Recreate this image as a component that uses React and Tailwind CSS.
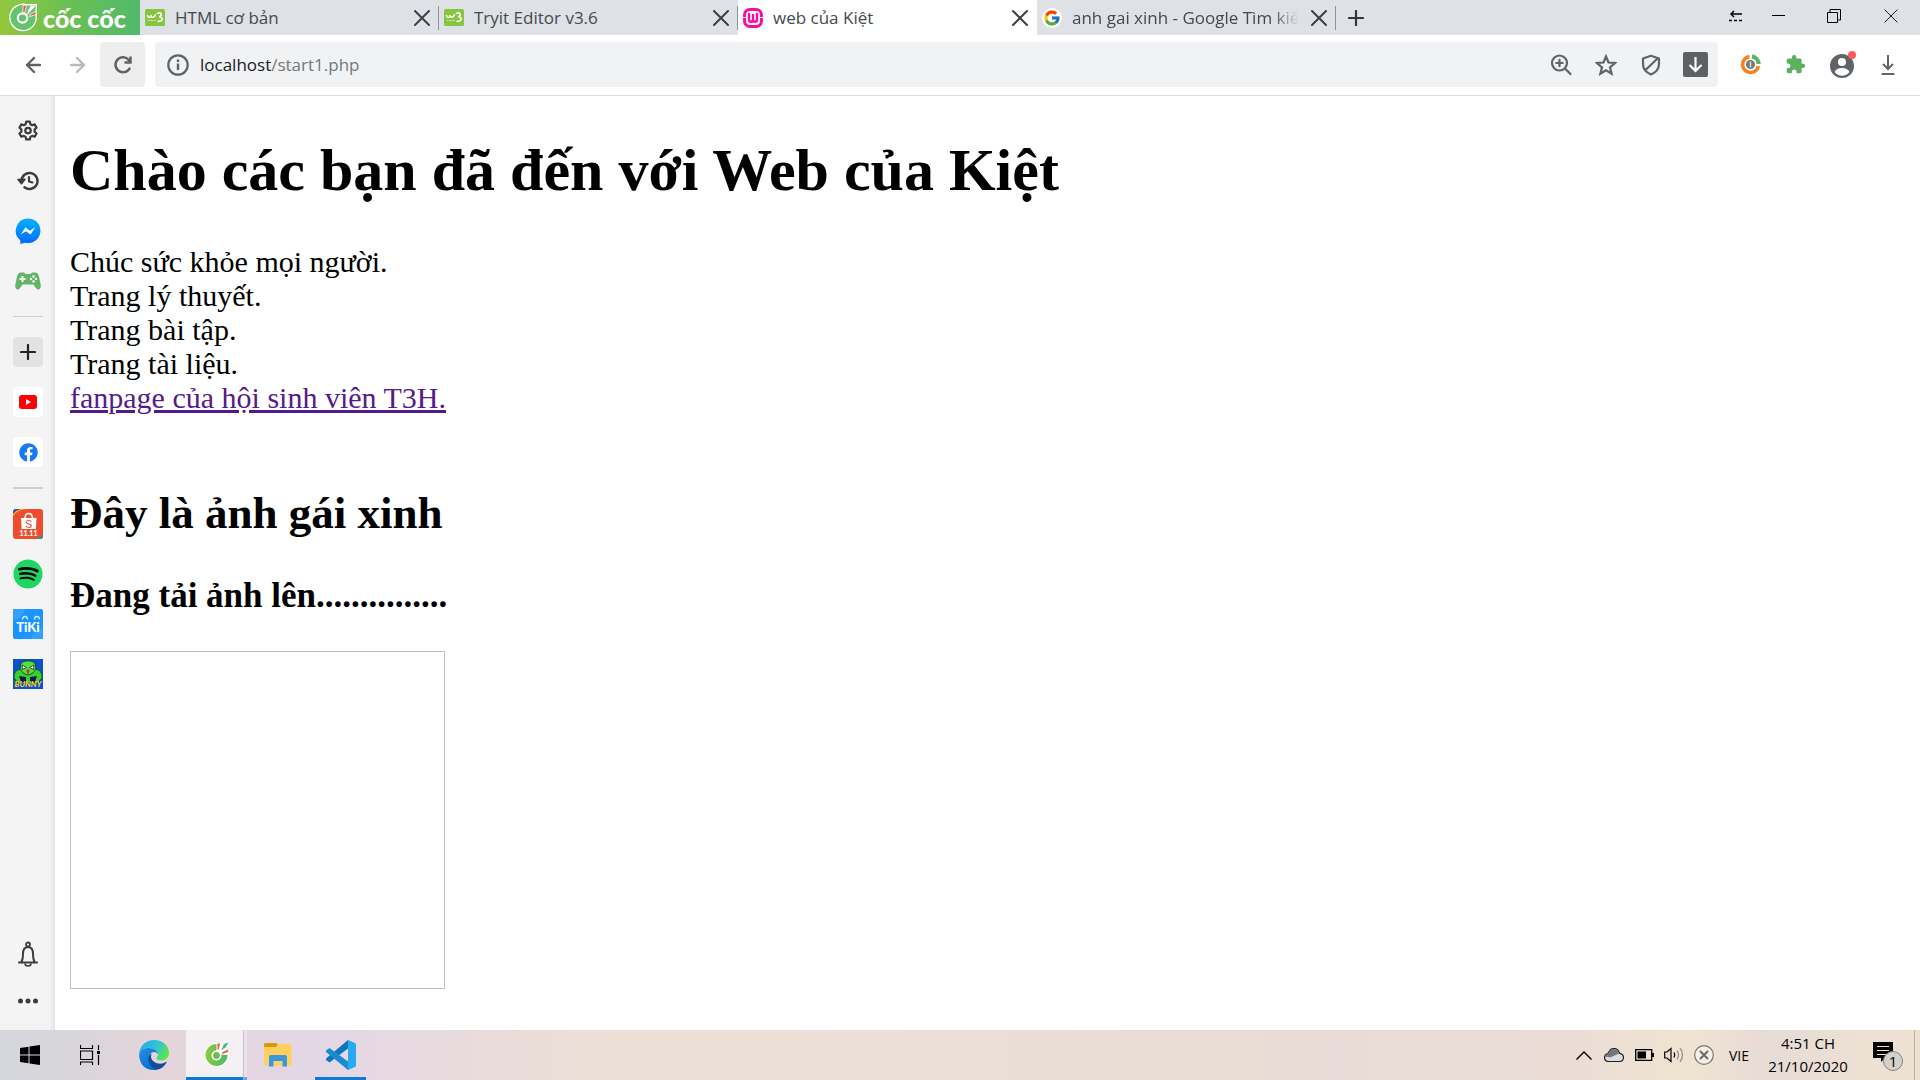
import React from "react";
import { FcGoogle } from "react-icons/fc";
import { FaSpotify, FaFacebook } from "react-icons/fa";
import { MdExtension } from "react-icons/md";

const line = { fill: "none", stroke: "currentColor", strokeLinecap: "round", strokeLinejoin: "round" };

function CocCocMark() {
  return (
    <svg width="30" height="30" viewBox="0 0 30 30" aria-hidden="true">
      <path d="M18 2.500A13 13 0 1 0 26.500 11L27.500 2z" fill="#62c56d" />
      <path d="M19 2.200A13.200 13.200 0 1 0 27 12L27.200 1.800H19" fill="none" stroke="#fff" strokeWidth="1.400" />
      <circle cx="13.500" cy="15" r="4.700" fill="none" stroke="#fff" strokeWidth="2.200" />
      <path d="M14 2.500l3-.3.300 1.500-1.500 6-2-.5z M26.500 8.500l.8 3-7 2.200.6-2z" fill="#f2563c" stroke="#fff" strokeWidth=".8" />
      <path d="M18.500 8.500L22 2.500l4.500.5-6.500 7z" fill="#fff" />
      <path d="M17 11.500l3-2" stroke="#fff" strokeWidth="1.500" />
    </svg>
  );
}

function W3Favicon() {
  return (
    <svg width="20" height="17" viewBox="0 0 20 17" aria-hidden="true">
      <rect width="20" height="17" rx="1.500" fill="#87c540" />
      <path d="M2.500 6.500c.3 2.600 3.300 2.600 3.500 0 .2 2.600 3.600 2.600 4.200-.7" {...line} stroke="#fff" strokeWidth="1.500" />
      <path d="M12.400 4.400c3.400-1.700 5.400 1.400 2.300 3.300 4.100.9 2.800 5.300-1.700 4.600" {...line} stroke="#fff" strokeWidth="1.600" />
      <path d="M3 11.500h8" stroke="#d9efc1" strokeWidth="1" strokeDasharray="1 .5" />
    </svg>
  );
}

function WampFavicon() {
  return (
    <svg width="20" height="20" viewBox="0 0 20 20" aria-hidden="true">
      <rect x="1.500" y="1.500" width="17" height="17" rx="5.500" fill="#fff" stroke="#f90aa0" strokeWidth="3" />
      <path d="M6 6v5.500q0 2.300 2 2.300t2-2.300V7v4.500q0 2.300 2 2.300t2-2.300V6" {...line} stroke="#f90aa0" strokeWidth="2.400" />
      <path d="M0 9.500h3.200M16.800 9.500H20" stroke="#fff" strokeWidth="1" />
    </svg>
  );
}

function GoogleFavicon() {
  return (
    <span className="flex size-5 items-center justify-center rounded-full bg-white">
      <FcGoogle size={18} />
    </span>
  );
}

function Cross({ size = 16, width = 2 }) {
  return (
    <svg width={size} height={size} viewBox="0 0 16 16" aria-hidden="true">
      <path d="M1 1l14 14M15 1L1 15" fill="none" stroke="currentColor" strokeWidth={width} strokeLinecap="round" />
    </svg>
  );
}

const tabs = [
  { title: "HTML cơ bản", icon: <W3Favicon /> },
  { title: "Tryit Editor v3.6", icon: <W3Favicon /> },
  { title: "web của Kiệt", icon: <WampFavicon />, active: true },
  { title: "anh gai xinh - Google Tìm kiếm", icon: <GoogleFavicon />, clipped: true },
];

function Tab({ title, icon, active, clipped }) {
  return (
    <div className={`flex h-full w-[299px] min-w-0 items-center pl-[5px] ${active ? "bg-white" : "bg-[#dee1e6]"}`}>
      <span className="flex w-6 shrink-0 items-center">{icon}</span>
      <button
        type="button"
        className={`ml-1.5 min-w-0 flex-1 overflow-hidden text-left whitespace-nowrap ${
          clipped ? "[mask-image:linear-gradient(to_right,#000_88%,transparent)]" : ""
        }`}
      >
        {title}
      </button>
      <button type="button" aria-label={`Đóng ${title}`} className="ml-2 flex size-6 shrink-0 items-center justify-center text-[#3c4043]">
        <Cross />
      </button>
      <span className={`ml-1 h-6 w-px shrink-0 ${active ? "bg-transparent" : "bg-[#8e9196]"}`} />
    </div>
  );
}

function TabStrip() {
  return (
    <header className="flex h-[35px] shrink-0 items-center bg-[#dee1e6] text-[17px] text-[#45494d]">
      <button
        type="button"
        className="flex h-full w-[140px] shrink-0 items-center gap-1 bg-linear-to-r from-[#93c83d] via-[#69bf53] to-[#50ba6a] pl-[9px] text-white"
      >
        <CocCocMark />
        <span className="font-['Lato'] text-[25px] leading-8 font-black whitespace-nowrap">cốc cốc</span>
      </button>
      {tabs.map((tab) => (
        <Tab key={tab.title} {...tab} />
      ))}
      <button type="button" aria-label="Thẻ mới" className="flex size-10 items-center justify-center text-[#33373a]">
        <svg width="16" height="16" viewBox="0 0 16 16" aria-hidden="true">
          <path d="M8 1v14M1 8h14" {...line} strokeWidth="2.200" />
        </svg>
      </button>
      <div className="ml-auto flex h-full shrink-0 items-center pb-1 text-black">
        <button type="button" aria-label="Cuộn thẻ" className="flex w-7 justify-center">
          <svg width="14" height="12" viewBox="0 0 14 12" aria-hidden="true">
            <path d="M13 4H2M5 1L2 4l3 3" fill="none" stroke="currentColor" strokeWidth="1.500" />
            <path d="M0 10.500h14" stroke="currentColor" strokeWidth="1.500" strokeDasharray="3 2" />
          </svg>
        </button>
        <button type="button" aria-label="Thu nhỏ" className="flex w-14 justify-center">
          <svg width="13" height="13" viewBox="0 0 13 13" aria-hidden="true">
            <path d="M0 6.500h13" stroke="currentColor" />
          </svg>
        </button>
        <button type="button" aria-label="Khôi phục" className="flex w-14 justify-center">
          <svg width="14" height="14" viewBox="0 0 14 14" aria-hidden="true">
            <path d="M.5 3.500h10v10H.5zM3 3V.5h10.500v10.500H11" fill="none" stroke="currentColor" />
          </svg>
        </button>
        <button type="button" aria-label="Đóng" className="flex w-[58px] justify-center">
          <Cross size={14} width={1} />
        </button>
      </div>
    </header>
  );
}

function ToolButton({ label, children, className = "" }) {
  return (
    <button type="button" aria-label={label} className={`flex size-[45px] shrink-0 items-center justify-center ${className}`}>
      {children}
    </button>
  );
}

function Toolbar() {
  return (
    <nav className="flex shrink-0 items-center border-b border-[#dadce0] bg-white px-[10px] pt-[7px] pb-2 text-[#5f6368]">
      <ToolButton label="Quay lại">
        <svg width="16" height="18" viewBox="0 0 16 18" aria-hidden="true">
          <path d="M15 9H2M9 2L2 9l7 7" {...line} strokeWidth="2.400" />
        </svg>
      </ToolButton>
      <ToolButton label="Tiến" className="text-[#bababc]">
        <svg width="16" height="18" viewBox="0 0 16 18" aria-hidden="true">
          <path d="M1 9h13M7 2l7 7-7 7" {...line} strokeWidth="2.400" />
        </svg>
      </ToolButton>
      <ToolButton label="Tải lại" className="rounded bg-[#eeeeee]">
        <svg width="18" height="20" viewBox="0 0 18 20" aria-hidden="true">
          <path d="M15.500 13.500A7.500 7.500 0 1 1 15.500 6" {...line} strokeWidth="2.500" />
          <path d="M16.500 1.500V7.500h-6" fill="none" stroke="currentColor" strokeWidth="2.500" />
        </svg>
      </ToolButton>
      <div className="ml-[10px] flex h-[45px] min-w-0 flex-1 items-center rounded bg-[#f1f2f4] pl-3">
        <svg width="22" height="22" viewBox="0 0 22 22" aria-hidden="true">
          <circle cx="11" cy="11" r="9.700" fill="none" stroke="currentColor" strokeWidth="2.200" />
          <path d="M11 9.500V16M11 5.500V8" stroke="currentColor" strokeWidth="2.400" />
        </svg>
        <button type="button" className="ml-[11px] flex-1 truncate text-left text-[17px] text-[#74777b]">
          <span className="text-[#202124]">localhost</span>/start1.php
        </button>
        <ToolButton label="Thu phóng">
          <svg width="22" height="22" viewBox="0 0 22 22" aria-hidden="true">
            <circle cx="9.500" cy="9" r="7.500" {...line} strokeWidth="2.200" />
            <path d="M15 14.500l5.500 5.500M9.500 5.800v6.400M6.300 9h6.400" {...line} strokeWidth="2.200" />
          </svg>
        </ToolButton>
        <ToolButton label="Đánh dấu trang">
          <svg width="22" height="22" viewBox="0 0 22 22" aria-hidden="true">
            <path d="M11 2.500l2.500 6 6.500.5-5 4.300 1.600 6.400L11 16.300l-5.600 3.400L7 13.300 2 9l6.500-.5z" fill="none" stroke="currentColor" strokeWidth="2.200" />
          </svg>
        </ToolButton>
        <ToolButton label="Chặn quảng cáo">
          <svg width="20" height="22" viewBox="0 0 20 22" aria-hidden="true">
            <path d="M10 1.800l8 2.700v5.500c0 4.800-3 8.300-8 10.500-5-2.200-8-5.700-8-10.500V4.500zM4.500 16L16.500 4.500" {...line} strokeWidth="2.200" />
          </svg>
        </ToolButton>
        <ToolButton label="Tải video">
          <svg width="25" height="25" viewBox="0 0 25 25" aria-hidden="true">
            <rect width="25" height="25" rx="2" fill="#5f6063" />
            <path d="M12.500 5v14M6.500 13l6 6 6-6" fill="none" stroke="#fff" strokeWidth="2.200" />
          </svg>
        </ToolButton>
      </div>
      <ToolButton label="Tiết kiệm" className="ml-[10px]">
        <svg width="21" height="21" viewBox="0 0 21 21" aria-hidden="true">
          <path d="M9.500 2.600A8 8 0 1 0 18.400 12" fill="none" stroke="#f58220" strokeWidth="3.600" />
          <path d="M12 2.400A8 8 0 0 1 18.600 10" fill="none" stroke="#5cb260" strokeWidth="4.200" />
          <circle cx="10.500" cy="10.500" r="4.500" fill="#77787b" />
          <path d="M10.500 7.500v6" stroke="#d7d8da" strokeWidth="1.500" />
        </svg>
      </ToolButton>
      <ToolButton label="Tiện ích">
        <MdExtension size={21} color="#5cb05f" />
      </ToolButton>
      <ToolButton label="Hồ sơ" className="ml-0.5">
        <svg width="26" height="27" viewBox="0 0 26 27" aria-hidden="true">
          <circle cx="12" cy="15" r="12" fill="#5f6368" />
          <circle cx="12" cy="11" r="4" fill="#fff" />
          <path d="M4.500 21q2-4 7.500-4t7.500 4a9.500 9.500 0 0 1-15 0z" fill="#fff" />
          <circle cx="22" cy="4" r="4" fill="#ff5a5f" />
        </svg>
      </ToolButton>
      <ToolButton label="Tải xuống">
        <svg width="16" height="20" viewBox="0 0 16 20" aria-hidden="true">
          <path d="M8 0v14M3 9l5 5 5-5" fill="none" stroke="currentColor" strokeWidth="2" />
          <path d="M2.500 19h11" {...line} strokeWidth="2.200" />
        </svg>
      </ToolButton>
    </nav>
  );
}

function Gear() {
  return (
    <svg width="22" height="22" viewBox="0 0 24 24" aria-hidden="true">
      <path
        d="M10 1.800h4l.6 2.800 1.900 1.100 2.800-.9 2 3.500-2.100 2v2.400l2.100 2-2 3.500-2.800-.9-1.900 1.100-.6 2.800h-4l-.6-2.800-1.900-1.100-2.800.9-2-3.500 2.100-2v-2.400l-2.100-2 2-3.500 2.800.9 1.900-1.100z"
        {...line}
        strokeWidth="2.400"
      />
      <circle cx="12" cy="11.500" r="3" fill="none" stroke="currentColor" strokeWidth="2.400" />
    </svg>
  );
}

function History() {
  return (
    <svg width="22" height="20" viewBox="0 0 22 20" aria-hidden="true">
      <path d="M4.500 10a8 8 0 1 1 3 6.200" {...line} strokeWidth="2.500" />
      <path d="M1 8.500l7-.3-3.500 4.600z" fill="currentColor" stroke="currentColor" strokeWidth="1.500" strokeLinejoin="round" />
      <path d="M12 6v4.500l3.500 1" {...line} strokeWidth="2.200" />
    </svg>
  );
}

function Messenger() {
  return (
    <svg width="26" height="26" viewBox="0 0 26 26" aria-hidden="true">
      <defs>
        <linearGradient id="messenger" x1="0" y1="0" x2="0" y2="1">
          <stop offset="0" stopColor="#00b2ff" />
          <stop offset="1" stopColor="#006aff" />
        </linearGradient>
      </defs>
      <path d="M13 .5a12.300 12.300 0 1 1-3 24.200L5.500 26l-.3-3.800A12.300 12.300 0 0 1 13 .5z" fill="url(#messenger)" />
      <path d="M5.500 16.500l5-7.200 4.300 3.400L20.500 9l-5 7.500-4.500-3.300z" fill="#fff" />
    </svg>
  );
}

function Gamepad() {
  return (
    <svg width="26" height="18" viewBox="0 0 26 18" aria-hidden="true">
      <path d="M5 .5h4l1.500 1.500h5L17 .5h4q2 .5 3 4l1.800 9q.2 3.500-2.300 4-1.800.2-3-2l-2-3h-11l-2 3q-1.200 2.200-3 2Q0 17 .2 13.500L2 4.500Q3 1 5 .5z" fill="#63b565" />
      <path d="M7.500 4v6M4.500 7h6" stroke="#fff" strokeWidth="2" />
      <g fill="#fff">
        <circle cx="18.500" cy="4.500" r="1.200" />
        <circle cx="18.500" cy="9.500" r="1.200" />
        <circle cx="16" cy="7" r="1.200" />
        <circle cx="21" cy="7" r="1.200" />
      </g>
    </svg>
  );
}

function YouTube() {
  return (
    <svg width="18" height="14" viewBox="0 0 18 14" aria-hidden="true">
      <rect width="18" height="14" rx="3" fill="#f00" />
      <path d="M7 4l5 3-5 3z" fill="#fff" />
    </svg>
  );
}

function Shopee() {
  return (
    <svg width="30" height="30" viewBox="0 0 30 30" aria-hidden="true">
      <rect width="30" height="30" rx="3" fill="#ee4d2d" />
      <path d="M0 6V3q0-3 3-3h5Q3 1 0 6z" fill="#1c62ad" />
      <path d="M0 7Q5 0 15 0H9Q3 1 0 5z" fill="#f6b51e" />
      <path d="M23 30q5-1 7-5v2q0 3-3 3z" fill="#2389c9" />
      <path d="M12 9q.3-4.500 3.700-4.500T19.500 9" fill="none" stroke="#fff" strokeWidth="1.500" />
      <path d="M8 9h15.500l-.6 11H8.600z" fill="#fff" />
      <text x="15.700" y="18.500" textAnchor="middle" fontSize="11" fill="#ee4d2d" fontFamily="Liberation Sans">S</text>
      <text x="15.500" y="27" textAnchor="middle" fontSize="7" fontWeight="900" fill="#fff" fontFamily="Lato">11.11</text>
    </svg>
  );
}

function Tiki() {
  return (
    <svg width="30" height="30" viewBox="0 0 30 30" aria-hidden="true">
      <rect width="30" height="30" rx="2" fill="#1a94ff" />
      <path d="M0 0h12q-2 9-12 12zM18 30q2-9 12-11v11z" fill="#34a1ff" />
      <text x="15" y="22.500" textAnchor="middle" fontSize="13" fontWeight="900" fill="#fff" fontFamily="Lato">TiKi</text>
      <path d="M9.500 10.500q0-3 2.500-3t2.500 3M21.500 10.500q0-3 2.500-3t2.500 3" fill="none" stroke="#d6edff" strokeWidth="1.400" />
    </svg>
  );
}

function Bunny() {
  return (
    <svg width="30" height="30" viewBox="0 0 30 30" aria-hidden="true">
      <rect width="30" height="30" fill="#0b52d0" />
      <path d="M1 19q-1-7 6-9h16q7 2 6 9l-4 5H5z" fill="#39cf35" stroke="#0a3410" strokeWidth=".8" />
      <path d="M6 17l7 1v5H8zM24 17l-7 1v5h5z" fill="#0c1c4a" />
      <path d="M8 4q7-4.500 14 0l1 5q-2 6-8 7-6-1-8-7z" fill="#4ee146" stroke="#0a3410" strokeWidth=".8" />
      <path d="M9 6l4.500 2.500L9.500 10.500zM21 6l-4.500 2.500 4 2z" fill="#fff" stroke="#10350f" strokeWidth=".8" />
      <path d="M13.500 10.500h3l-.5 4h-2z" fill="#d8262a" />
      <text x="15" y="28" textAnchor="middle" fontSize="8" fontWeight="900" fill="#ffc928" fontFamily="Lato" fontStyle="italic">BUNNY</text>
    </svg>
  );
}

function SideButton({ label, children, className = "" }) {
  return (
    <button type="button" aria-label={label} className={`flex size-[30px] shrink-0 items-center justify-center ${className}`}>
      {children}
    </button>
  );
}

function Sidebar() {
  return (
    <aside className="flex w-[55px] shrink-0 flex-col items-center gap-5 border-r border-[#e4e4e4] bg-[#f4f4f4] pt-5 pl-0.5 text-[#3c3c3c] shadow-[inset_-5px_0_4px_-3px_#e6e6e6]">
      <SideButton label="Cài đặt"><Gear /></SideButton>
      <SideButton label="Lịch sử"><History /></SideButton>
      <SideButton label="Messenger"><Messenger /></SideButton>
      <SideButton label="Trò chơi"><Gamepad /></SideButton>
      <hr className="w-[30px] border-t border-[#cfcfcf]" />
      <SideButton label="Thêm" className="rounded bg-[#e3e3e3] text-[#222]">
        <svg width="16" height="16" viewBox="0 0 16 16" aria-hidden="true">
          <path d="M8 1v14M1 8h14" {...line} strokeWidth="2.200" />
        </svg>
      </SideButton>
      <SideButton label="YouTube" className="rounded bg-white"><YouTube /></SideButton>
      <SideButton label="Facebook" className="rounded bg-white"><FaFacebook size={19} color="#1877f2" /></SideButton>
      <hr className="w-[30px] border-t-2 border-[#cfcfcf]" />
      <SideButton label="Shopee"><Shopee /></SideButton>
      <SideButton label="Spotify" className="rounded-full bg-[radial-gradient(circle,#000_12px,transparent_13px)]">
        <FaSpotify size={30} color="#1ed760" />
      </SideButton>
      <SideButton label="Tiki"><Tiki /></SideButton>
      <SideButton label="Bunny"><Bunny /></SideButton>
      <div className="mt-auto flex flex-col gap-[17px] pb-[14px]">
        <SideButton label="Thông báo">
          <svg width="20" height="26" viewBox="0 0 20 26" aria-hidden="true">
            <path d="M1 21.500h18M3.500 21q1.500-3 1.500-8c0-4.500 2-7 5-7s5 2.500 5 7q0 5 1.500 8" {...line} strokeWidth="2" />
            <circle cx="10" cy="3.500" r="2" {...line} strokeWidth="1.800" />
            <path d="M7 22.500q0 2.500 3 2.500t3-2.500" fill="none" stroke="currentColor" strokeWidth="1.600" />
          </svg>
        </SideButton>
        <SideButton label="Khác">
          <svg width="20" height="6" viewBox="0 0 20 6" fill="currentColor" aria-hidden="true">
            <circle cx="2.500" cy="3" r="2.500" />
            <circle cx="10" cy="3" r="2.500" />
            <circle cx="17.500" cy="3" r="2.500" />
          </svg>
        </SideButton>
      </div>
    </aside>
  );
}

function Page() {
  return (
    <main className="min-w-0 flex-1 overflow-hidden bg-white px-[15px] font-['Liberation_Serif',serif] text-[30px] leading-[34px] text-black">
      <h1 className="mt-10 text-[60px] leading-[68px] font-bold">Chào các bạn đã đến với Web của Kiệt</h1>
      <p className="mt-[41px]">Chúc sức khỏe mọi người.</p>
      <p>Trang lý thuyết.</p>
      <p>Trang bài tập.</p>
      <p>Trang tài liệu.</p>
      <a href="#fanpage" className="text-[#551a8b] underline decoration-[3px]">fanpage của hội sinh viên T3H.</a>
      <h2 className="mt-[72px] text-[45px] leading-[52px] font-bold">Đây là ảnh gái xinh</h2>
      <h3 className="mt-[37px] text-[35px] leading-10 font-bold">Đang tải ảnh lên...............</h3>
      <div role="img" aria-label="Ảnh chưa tải" className="mt-[35px] h-[338px] w-[375px] border border-[#c0c0c0]" />
    </main>
  );
}

function Edge() {
  return (
    <svg width="30" height="30" viewBox="0 0 30 30" aria-hidden="true">
      <defs>
        <linearGradient id="edgeTop" x1="0" y1=".3" x2="1" y2=".7">
          <stop offset="0" stopColor="#2aaae8" />
          <stop offset=".5" stopColor="#2fc4d6" />
          <stop offset="1" stopColor="#63e83f" />
        </linearGradient>
        <linearGradient id="edgeLeft" x1="0" y1="0" x2="1" y2="1">
          <stop offset="0" stopColor="#2392e3" />
          <stop offset="1" stopColor="#0067cc" />
        </linearGradient>
      </defs>
      <path d="M0 14C1 5.500 7 0 15 0c9 0 15 6 15 13 0 5-4 7.500-7.500 7.500-3.500 0-5-1-5-2 0-.8 1.500-1.500 1.500-4C19 11 15 8 10.500 8 5 8 1.500 11 0 14z" fill="url(#edgeTop)" />
      <path d="M0 15C1 10.500 5 8 10 8c5 0 9 3 9 6.500 0 0-1-2.500-3.500-2.500-5 0-5.500 4.500-5.500 7 0 6 4.500 10 8.500 10.500Q17 30 15 30 1 29.500 0 15z" fill="url(#edgeLeft)" />
      <path d="M12.500 13.500q-2 7 4.500 9.500 5.500 2 10-1 1-.5.600.5Q24 29 17.500 29.700C10 27.500 6.500 17 12.500 13.500z" fill="#104c99" />
    </svg>
  );
}

function CocCocApp() {
  return (
    <svg width="26" height="26" viewBox="0 0 26 26" aria-hidden="true">
      <defs>
        <linearGradient id="coccoc">
          <stop offset="0" stopColor="#8cc83e" />
          <stop offset="1" stopColor="#4cb971" />
        </linearGradient>
      </defs>
      <circle cx="12.500" cy="14" r="12" fill="#fff" />
      <path d="M12.500 3A11 11 0 1 0 23.500 14l-7-.5a4.500 4.500 0 1 1-4-3.500z" fill="url(#coccoc)" />
      <circle cx="12.500" cy="14.500" r="4.200" fill="#69bd51" stroke="#fff" strokeWidth="1.600" />
      <path d="M13.500 2.500H16l-1.200 6h-1.300zM24 8.500V11l-6 2v-1.500z" fill="#f2583e" />
      <path d="M17 9.500L20 3l4.500-1.500-3 5z" fill="#4bbd73" />
    </svg>
  );
}

function Explorer() {
  return (
    <svg width="28" height="24" viewBox="0 0 28 24" aria-hidden="true">
      <path d="M0 1.500Q0 0 1.500 0h11L14 2l-1.500 2H0z" fill="#d99a09" />
      <path d="M0 4h12l2.500-3H26q1.500 0 1.500 1.500V21q0 1.500-1.500 1.500H1.500Q0 22.500 0 21z" fill="#ffd05c" />
      <path d="M5 23.500V14q0-2 2-2h14q2 0 2 2v9.500h-4.500V18h-9v5.500z" fill="#3a97dd" />
    </svg>
  );
}

function VsCode() {
  return (
    <svg width="30" height="30" viewBox="0 0 30 30" aria-hidden="true">
      <path d="M22 0v8.500L3.500 22.500 0 20v-1.500z" fill="#0e76bb" />
      <path d="M0 10.500L3.500 8 22 21.500V30L0 12z" fill="#1a8ad4" />
      <path d="M22 0l7 3q1 .5 1 1.500v21q0 1-1 1.500l-7 3z" fill="#27a9f3" />
    </svg>
  );
}

function TaskButton({ label, className, children }) {
  return (
    <button type="button" aria-label={label} className={`flex h-full shrink-0 items-center justify-center ${className}`}>
      {children}
    </button>
  );
}

function TrayButton({ label, children }) {
  return (
    <button type="button" aria-label={label} className="flex w-[30px] shrink-0 items-center justify-center">
      {children}
    </button>
  );
}

function Taskbar() {
  return (
    <footer className="flex h-[50px] shrink-0 items-center bg-[linear-gradient(to_right,#d5d7dc_0%,#dad6db_5%,#e4d5d9_8%,#e3d7e6_16%,#e7dae0_22%,#eadcda_26%,#ecdfd6_32%,#ebded6_50%,#e9ddd5_64%,#e9dbd7_69%,#ebddd6_82%,#efe4d0_88%,#e7dbd7_92%,#ebe0d3_96%,#ede2d2_100%)] text-[15px] leading-[23px] text-black">
      <TaskButton label="Bắt đầu" className="w-[60px]">
        <svg width="20" height="20" viewBox="0 0 20 20" aria-hidden="true">
          <path d="M0 3l8.500-1.200v7.700H0zM9.500 1.600L20 0v9.500H9.500zM0 10.500h8.500v7.800L0 17zM9.500 10.500H20V20L9.500 18.400z" />
        </svg>
      </TaskButton>
      <TaskButton label="Chế độ xem tác vụ" className="w-[60px]">
        <svg width="20" height="20" viewBox="0 0 20 20" fill="none" stroke="currentColor" aria-hidden="true">
          <path d="M.5 0v3.500h12V0M.5 6h12v8.500H.5zM.5 20v-3h12v3M18.500 0v5M18.500 10v10" strokeWidth="1.200" />
          <path d="M17 6h3v3h-3z" fill="currentColor" stroke="none" />
        </svg>
      </TaskButton>
      <TaskButton label="Microsoft Edge" className="w-[66px] pl-0.5"><Edge /></TaskButton>
      <TaskButton label="Cốc Cốc" className="w-[57px] border-b-[3px] border-[#0a7bdb] bg-[#f4f0f3] pl-1"><CocCocApp /></TaskButton>
      <span className="h-full w-1 border-b-[3px] border-l border-b-[#68a9e3] border-l-[#c9bfca] bg-[#ebe2eb]" />
      <TaskButton label="Tệp" className="w-[61px]"><Explorer /></TaskButton>
      <TaskButton label="Visual Studio Code" className="mx-[7px] w-[51px] border-b-[3px] border-[#0a7bdb] pt-[3px]"><VsCode /></TaskButton>
      <div className="ml-auto flex h-full items-center">
        <TrayButton label="Biểu tượng ẩn">
          <svg width="16" height="9" viewBox="0 0 16 9" aria-hidden="true">
            <path d="M.5 8.500L8 1l7.500 7.500" fill="none" stroke="currentColor" strokeWidth="1.400" />
          </svg>
        </TrayButton>
        <TrayButton label="OneDrive">
          <svg width="20" height="14" viewBox="0 0 20 14" aria-hidden="true">
            <path d="M5 13.500Q.5 13.500.5 9.500.7 6 4.500 5 6 .5 10 .5t5.500 4.800q4 .5 4 4.200 0 4-4 4z" fill="#dcdcdf" stroke="#222" strokeWidth="1.200" />
            <path d="M1 9.500Q1 6 5 5.300 6.500 1 10 1t5 4.500l-9 4q-3-1.500-5 0z" fill="#77777b" />
          </svg>
        </TrayButton>
        <TrayButton label="Pin">
          <svg width="19" height="12" viewBox="0 0 19 12" aria-hidden="true">
            <path d="M.7.7h16v10.600H.7z" fill="none" stroke="currentColor" strokeWidth="1.300" />
            <path d="M2.500 2.500H11v7H2.500zM17 4h2v4h-2z" />
          </svg>
        </TrayButton>
        <TrayButton label="Âm lượng">
          <svg width="20" height="16" viewBox="0 0 20 16" fill="none" stroke="currentColor" aria-hidden="true">
            <path d="M.7 5H3l4-3.500v13L3 11H.7z" strokeWidth="1.200" />
            <path d="M10 5.500q1.500 2.500 0 5" strokeWidth="1.300" />
            <path d="M13 3.500q3 4.500 0 9M16 1q5 7 0 14" stroke="#8c8783" strokeWidth="1.200" />
          </svg>
        </TrayButton>
        <TrayButton label="Trạng thái">
          <svg width="20" height="20" viewBox="0 0 20 20" aria-hidden="true">
            <circle cx="10" cy="10" r="9.300" fill="#f4eee7" stroke="#77736f" strokeWidth="1.200" />
            <path d="M6 6l8 8M14 6l-8 8" stroke="#6b6865" strokeWidth="2" />
          </svg>
        </TrayButton>
        <button type="button" className="w-10 text-[14px]">VIE</button>
        <button type="button" className="w-[98px] text-center">
          <time className="block">4:51 CH</time>
          <time className="block">21/10/2020</time>
        </button>
        <button type="button" aria-label="Trung tâm thông báo" className="ml-4 w-[41px]">
          <svg width="32" height="32" viewBox="0 0 32 32" aria-hidden="true">
            <path d="M0 3h20v16h-8l-4 4v-4H0z" />
            <path d="M4 7.500h12M4 11.500h12M4 15.500h9" stroke="#eee3d6" strokeWidth="1.200" />
            <circle cx="20" cy="22" r="9.500" fill="#d4d0cb" stroke="#85817d" />
            <text x="20" y="27.500" textAnchor="middle" fontSize="15">1</text>
          </svg>
        </button>
        <span className="mr-[5px] h-full w-px bg-[#b9aea6]" />
      </div>
    </footer>
  );
}

export default function App() {
  return (
    <div className="flex h-screen flex-col overflow-hidden font-['Open_Sans','Noto_Sans',sans-serif]">
      <TabStrip />
      <Toolbar />
      <div className="flex min-h-0 flex-1">
        <Sidebar />
        <Page />
      </div>
      <Taskbar />
    </div>
  );
}
